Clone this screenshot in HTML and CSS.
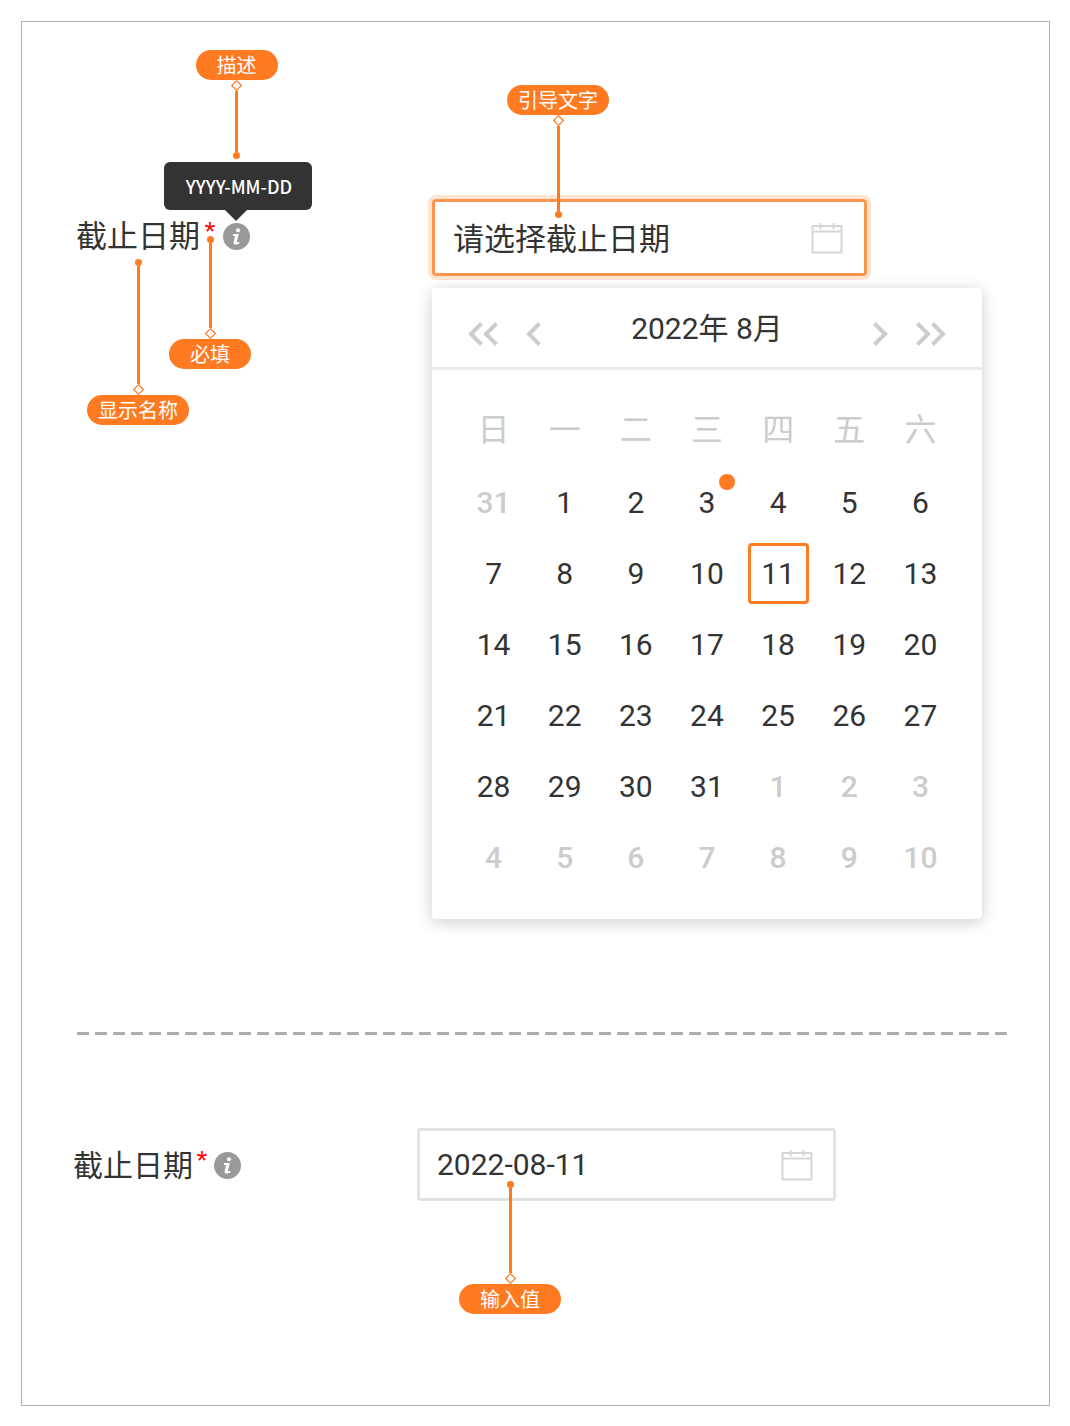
FILE: index.html
```html
<!DOCTYPE html>
<html lang="zh-CN">
<head>
<meta charset="utf-8">
<meta name="viewport" content="width=device-width, initial-scale=1">
<title>截止日期</title>
<link rel="stylesheet" href="styles.css">
</head>
<body>
<svg class="sprite" aria-hidden="true">
  <symbol id="info" viewBox="0 0 27 27">
    <circle cx="13.5" cy="13.5" r="13.5" fill="#999"/>
    <circle cx="15" cy="7.3" r="2.1" fill="#fff"/>
    <path d="M10.2 11H15.8L14 18.2Q13.800 19.400 14.600 19.300L16.600 18.900L16.300 20.600Q14.800 21.600 12.800 21.600Q10.200 21.600 10.700 19L12 12.900H9.800Z" fill="#fff"/>
  </symbol>
  <symbol id="calendar" viewBox="0 0 32 32">
    <path d="M1.5 4V30.5H30.5V4M1 4H31M1 9.5H31M9.5 1V7M22.500 1V7" fill="none" stroke="#d6d6da" stroke-width="2"/>
  </symbol>
  <symbol id="diamond" viewBox="0 0 11 11">
    <path d="M5.500 .7L10.300 5.500L5.500 10.300L.7 5.500Z" fill="#fff" stroke="#ff7a20" stroke-width="1.200"/>
  </symbol>
  <symbol id="chevron" viewBox="0 0 15 24">
    <path d="M13.500 1.500L3 12L13.500 22.500" fill="none" stroke="#ccc" stroke-width="4"/>
  </symbol>
  <symbol id="chevrons" viewBox="0 0 30 24">
    <path d="M13.500 1.500L3 12L13.500 22.500M28.500 1.500L18 12L28.500 22.500" fill="none" stroke="#ccc" stroke-width="4"/>
  </symbol>
</svg>

<main class="frame">
  <section class="form-row">
    <div class="label">
      <span class="anchor name">
        <label for="due-empty">截止日期</label>
        <span class="callout callout-below callout-name"><i class="dot"></i><i class="line"></i><svg class="diamond"><use href="#diamond"/></svg><span class="pill pill-wide">显示名称</span></span>
      </span>
      <span class="anchor required">*
        <span class="callout callout-below callout-required"><i class="dot"></i><i class="line"></i><svg class="diamond"><use href="#diamond"/></svg><span class="pill">必填</span></span>
      </span>
      <span class="anchor info">
        <button class="info-button" type="button" aria-label="描述"><svg><use href="#info"/></svg></button>
        <span class="tooltip" role="tooltip">YYYY-MM-DD</span>
        <span class="callout callout-above callout-description"><span class="pill">描述</span><svg class="diamond"><use href="#diamond"/></svg><i class="line"></i><i class="dot"></i></span>
      </span>
    </div>
    <div class="control">
      <div class="field field-active">
        <input id="due-empty" type="text" placeholder="请选择截止日期">
        <svg class="calendar-icon"><use href="#calendar"/></svg>
        <span class="callout callout-above callout-placeholder"><span class="pill pill-wide">引导文字</span><svg class="diamond"><use href="#diamond"/></svg><i class="line"></i><i class="dot"></i></span>
      </div>
      <div class="picker">
        <header class="picker-head">
          <button type="button" class="nav" aria-label="上一年"><svg class="double"><use href="#chevrons"/></svg></button>
          <button type="button" class="nav" aria-label="上个月"><svg class="single"><use href="#chevron"/></svg></button>
          <span class="month">2022年 8月</span>
          <button type="button" class="nav nav-next" aria-label="下个月"><svg class="single"><use href="#chevron"/></svg></button>
          <button type="button" class="nav nav-next" aria-label="下一年"><svg class="double"><use href="#chevrons"/></svg></button>
        </header>
        <table class="days">
          <thead>
            <tr><th>日</th><th>一</th><th>二</th><th>三</th><th>四</th><th>五</th><th>六</th></tr>
          </thead>
          <tbody>
            <tr><td><button class="day other">31</button></td><td><button class="day">1</button></td><td><button class="day">2</button></td><td><button class="day marked">3</button></td><td><button class="day">4</button></td><td><button class="day">5</button></td><td><button class="day">6</button></td></tr>
            <tr><td><button class="day">7</button></td><td><button class="day">8</button></td><td><button class="day">9</button></td><td><button class="day">10</button></td><td><button class="day today">11</button></td><td><button class="day">12</button></td><td><button class="day">13</button></td></tr>
            <tr><td><button class="day">14</button></td><td><button class="day">15</button></td><td><button class="day">16</button></td><td><button class="day">17</button></td><td><button class="day">18</button></td><td><button class="day">19</button></td><td><button class="day">20</button></td></tr>
            <tr><td><button class="day">21</button></td><td><button class="day">22</button></td><td><button class="day">23</button></td><td><button class="day">24</button></td><td><button class="day">25</button></td><td><button class="day">26</button></td><td><button class="day">27</button></td></tr>
            <tr><td><button class="day">28</button></td><td><button class="day">29</button></td><td><button class="day">30</button></td><td><button class="day">31</button></td><td><button class="day other">1</button></td><td><button class="day other">2</button></td><td><button class="day other">3</button></td></tr>
            <tr><td><button class="day other">4</button></td><td><button class="day other">5</button></td><td><button class="day other">6</button></td><td><button class="day other">7</button></td><td><button class="day other">8</button></td><td><button class="day other">9</button></td><td><button class="day other">10</button></td></tr>
          </tbody>
        </table>
      </div>
    </div>
  </section>

  <hr class="divider">

  <section class="form-row form-row-compact">
    <div class="label">
      <label class="name" for="due-filled">截止日期</label>
      <span class="required">*</span>
      <span class="info"><button class="info-button" type="button" aria-label="描述"><svg><use href="#info"/></svg></button></span>
    </div>
    <div class="control">
      <div class="field">
        <input id="due-filled" type="text" value="2022-08-11">
        <svg class="calendar-icon"><use href="#calendar"/></svg>
        <span class="callout callout-below callout-value"><i class="dot"></i><i class="line"></i><svg class="diamond"><use href="#diamond"/></svg><span class="pill pill-wide">输入值</span></span>
      </div>
    </div>
  </section>
</main>
</body>
</html>
```
FILE: styles.css
```css
* {
  box-sizing: border-box;
}

body {
  margin: 0;
  padding: 21px 20px 20px 21px;
  background: #fff;
  color: #333;
  font-family: Roboto, "Noto Sans CJK SC", sans-serif;
  font-size: 30px;
}

button,
input {
  margin: 0;
  padding: 0;
  border: 0;
  background: none;
  color: inherit;
  font: inherit;
}

svg {
  display: block;
}

.sprite {
  position: absolute;
  width: 0;
  height: 0;
}

.frame {
  min-height: calc(100vh - 41px);
  border: 1px solid #b3b3b3;
}

/* Form rows */
.form-row {
  display: grid;
  grid-template-columns: 356px minmax(0, 1fr);
  padding: 177px 40px 0 54px;
}

.form-row-compact {
  grid-template-columns: 344px minmax(0, 1fr);
  padding: 93px 40px 0 51px;
}

.label {
  display: flex;
  align-items: center;
  height: 74px;
  font-family: "Noto Sans CJK SC", sans-serif;
  font-size: 31px;
  line-height: 44px;
}

.form-row-compact .label {
  font-size: 30px;
}

.name {
  padding-bottom: 4px;
}

.anchor {
  position: relative;
}

.required {
  width: 20px;
  padding-bottom: 8px;
  color: #f00;
  font-family: "Liberation Sans", sans-serif;
  font-size: 28px;
  line-height: 36px;
  text-align: center;
}

.form-row-compact .required {
  width: 18px;
}

.info {
  margin-left: 3px;
}

.info-button,
.info-button svg {
  display: block;
  width: 27px;
  height: 27px;
}

.field {
  position: relative;
  display: flex;
  align-items: center;
  max-width: 419px;
  height: 73px;
  padding: 0 20px 0 17px;
  border: 3px solid #e2e2e2;
  border-radius: 4px;
}

.field-active {
  max-width: 435px;
  height: 77px;
  padding: 0 21px 0 18px;
  border-color: #ff954d;
  box-shadow: 0 0 0 4px #ffe4d2;
}

.field input {
  flex: 1;
  min-width: 0;
  height: 44px;
  outline: 0;
}

.field-active input {
  height: 48px;
  padding-top: 4px;
  font-size: 31px;
}

.field input::placeholder {
  color: #333;
  opacity: 1;
}

.calendar-icon {
  width: 32px;
  height: 32px;
}

.divider {
  height: 3px;
  margin: 113px 41px 0 55px;
  border: 0;
  background: repeating-linear-gradient(90deg, #adadad 0 12px, transparent 12px 18px);
}

/* Date picker */
.picker {
  max-width: 550px;
  margin-top: 12px;
  padding-bottom: 26px;
  border-radius: 4px;
  background: #fff;
  box-shadow: 0 3px 16px rgba(0, 0, 0, 0.2);
}

.picker-head {
  display: flex;
  align-items: center;
  gap: 28px;
  height: 82px;
  padding: 0 36px;
  border-bottom: 3px solid #ebebeb;
}

.month {
  flex: 1;
  padding-bottom: 4px;
  text-align: center;
}

.nav {
  padding-top: 12px;
}

.nav-next svg {
  transform: scaleX(-1);
}

.single {
  width: 15px;
  height: 24px;
}

.double {
  width: 30px;
  height: 24px;
}

.days {
  width: calc(100% - 52px);
  margin: 26px 26px 0;
  border-collapse: collapse;
  table-layout: fixed;
}

.days th,
.days td {
  height: 71px;
  padding: 0;
  text-align: center;
  vertical-align: middle;
}

.days th {
  padding-bottom: 4px;
  color: #ccc;
  font-size: 32px;
  font-weight: 400;
  line-height: 44px;
}

.day {
  position: relative;
  display: block;
  width: 61px;
  height: 61px;
  margin: 0 auto;
  border-radius: 4px;
}

.other {
  color: #ccc;
  font-weight: 500;
}

.today {
  border: 3px solid #ff7a20;
}

.marked::after {
  content: "";
  position: absolute;
  top: 2px;
  right: 2px;
  width: 16px;
  height: 16px;
  border-radius: 50%;
  background: #ff7a20;
}

/* Annotations */
.tooltip {
  position: absolute;
  bottom: calc(100% + 13px);
  right: -62px;
  width: 148px;
  padding-left: 2px;
  border-radius: 6px;
  background: #333;
  color: #fff;
  font-size: 18px;
  font-weight: 500;
  line-height: 48px;
  text-align: center;
}

.tooltip::after {
  content: "";
  position: absolute;
  top: 100%;
  left: 61px;
  border: 11px solid transparent;
  border-top-color: #333;
  border-bottom: 0;
}

.callout {
  position: absolute;
  left: 50%;
  z-index: 1;
  display: flex;
  flex-direction: column;
  align-items: center;
  transform: translateX(-50%);
}

.pill {
  width: 82px;
  border-radius: 15px;
  background: #ff7a20;
  color: #fff;
  font-family: "Noto Sans CJK SC", sans-serif;
  font-size: 20px;
  line-height: 30px;
  text-align: center;
  white-space: nowrap;
}

.pill-wide {
  width: 102px;
}

.diamond {
  width: 11px;
  height: 11px;
}

.line {
  width: 3px;
  height: 85px;
  background: #ff7a20;
}

.dot {
  width: 7px;
  height: 7px;
  border-radius: 50%;
  background: #ff7a20;
}

.callout-description {
  bottom: calc(100% + 64px);
}

.callout-description .line {
  height: 61px;
}

.callout-name {
  top: 47px;
}

.callout-name .line {
  height: 118px;
}

.callout-required {
  top: 22px;
}

.callout-placeholder {
  bottom: 55px;
  left: 123px;
}

.callout-value {
  top: 50px;
  left: 90px;
}
```
